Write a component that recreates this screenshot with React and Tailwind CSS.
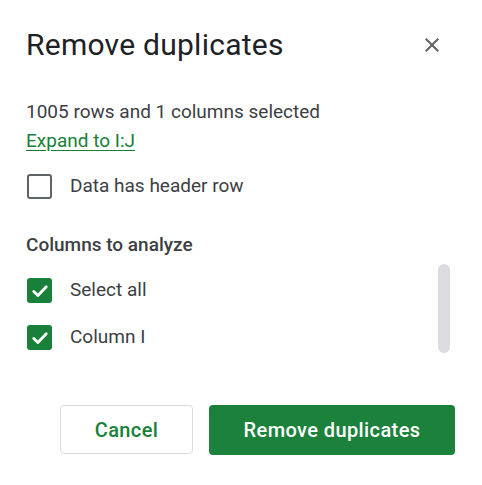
import React from 'react';

const font = { fontFamily: 'Roboto, "Noto Sans", sans-serif' };

const Checkbox = ({ checked }) =>
  checked ? (
    <div className="w-[25px] h-[25px] rounded-[3px] bg-[#188038] flex items-center justify-center shrink-0">
      <svg width="20" height="20" viewBox="0 0 24 24">
        <path d="M4.5 12.5l5 5L19.5 7" fill="none" stroke="#fff" strokeWidth="3.4" strokeLinecap="round" strokeLinejoin="round" />
      </svg>
    </div>
  ) : (
    <div className="w-[25px] h-[25px] rounded-[3px] border-[2px] border-[#5f6368] shrink-0" />
  );

const Row = ({ checked, label }) => (
  <div className="flex items-center h-[25px]">
    <Checkbox checked={checked} />
    <span className="ml-[18px] text-[19px] text-[#3c4043]">{label}</span>
  </div>
);

export default function App() {
  return (
    <div className="w-[482px] h-[485px] bg-white pl-[27px] pr-[27px] pt-[27px]" style={font}>
      <div className="flex items-center justify-between h-[36px]">
        <h1 className="-ml-[1px] text-[30px] leading-[36px] tracking-[0.25px] text-[#202124] font-normal">Remove duplicates</h1>
        <svg width="24" height="24" viewBox="0 0 24 24" className="mr-[11px]">
          <path d="M19 6.41L17.59 5 12 10.59 6.41 5 5 6.41 10.59 12 5 17.59 6.41 19 12 13.41 17.59 19 19 17.59 13.41 12z" fill="#5f6368" />
        </svg>
      </div>

      <p className="-ml-[1px] mt-[35px] text-[19px] leading-[28px] text-[#3c4043]">1005 rows and 1 columns selected</p>
      <a className="-ml-[1px] block mt-[1px] text-[19px] leading-[28px] text-[#188038] underline underline-offset-[3px]">Expand to I:J</a>

      <div className="mt-[19px]">
        <Row checked={false} label="Data has header row" />
      </div>

      <div className="-ml-[1px] mt-[34px] text-[19px] leading-[24px] font-medium text-[#3c4043]">Columns to analyze</div>

      <div className="mt-[7px] h-[89px] flex justify-between">
        <div className="pt-[14px] flex flex-col gap-[22px]">
          <Row checked label="Select all" />
          <Row checked label="Column I" />
        </div>
        <div className="w-[12px] h-[89px] rounded-full bg-[#dadce0] mr-[5px]" />
      </div>

      <div className="mt-[52px] flex justify-end gap-[16px]">
        <button className="w-[133px] h-[49px] rounded-[4px] border border-[#dadce0] text-[20px] tracking-[0.4px] font-medium text-[#188038]">
          Cancel
        </button>
        <button className="w-[246px] h-[50px] rounded-[4px] bg-[#1b813b] text-[20px] tracking-[0.4px] font-medium text-white">
          Remove duplicates
        </button>
      </div>
    </div>
  );
}
